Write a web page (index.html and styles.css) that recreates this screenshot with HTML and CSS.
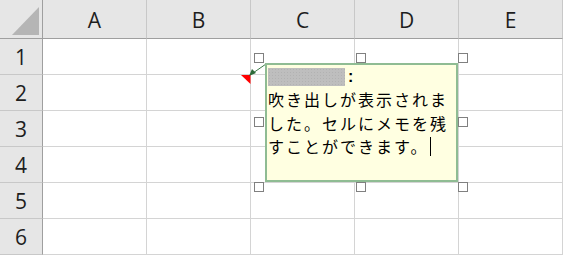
FILE: index.html
```html
<!DOCTYPE html>
<html lang="ja">
<head>
<meta charset="utf-8">
<link rel="stylesheet" href="styles.css">
</head>
<body>
<div class="sheet">
  <div class="grid">
    <div class="corner"><svg class="corner-tri" width="43" height="39" viewBox="0 0 43 39"><polygon points="12,35 39,35 39,7" fill="#b5b5b5"/></svg></div>
    <div class="ch">A</div><div class="ch">B</div><div class="ch">C</div><div class="ch">D</div><div class="ch">E</div>
    <div class="rh">1</div><div class="c"></div><div class="c"></div><div class="c"></div><div class="c"></div><div class="c"></div>
    <div class="rh">2</div><div class="c"></div><div class="c"></div><div class="c"></div><div class="c"></div><div class="c"></div>
    <div class="rh">3</div><div class="c"></div><div class="c"></div><div class="c"></div><div class="c"></div><div class="c"></div>
    <div class="rh">4</div><div class="c"></div><div class="c"></div><div class="c"></div><div class="c"></div><div class="c"></div>
    <div class="rh">5</div><div class="c"></div><div class="c"></div><div class="c"></div><div class="c"></div><div class="c"></div>
    <div class="rh">6</div><div class="c"></div><div class="c"></div><div class="c"></div><div class="c"></div><div class="c"></div>
  </div>

  <svg class="overlay" width="563" height="255" viewBox="0 0 563 255">
    <polygon points="241,75 250.5,75 250.5,84" fill="#ff0000"/>
    <line x1="266" y1="64" x2="253" y2="73" stroke="#3b7a47" stroke-width="1"/>
    <polygon points="249,76 256,73 252,69" fill="#2d6b3a"/>
  </svg>

  <div class="note">
    <div class="note-line"><span class="author"></span><span class="colon">:</span></div>
    <div class="note-line">吹き出しが表示されま</div>
    <div class="note-line">した。セルにメモを残</div>
    <div class="note-line">すことができます。<span class="caret"></span></div>
  </div>

  <div class="handle h-l h-t"></div>
  <div class="handle h-m h-t"></div>
  <div class="handle h-r h-t"></div>
  <div class="handle h-l h-v"></div>
  <div class="handle h-r h-v"></div>
  <div class="handle h-l h-b"></div>
  <div class="handle h-m h-b"></div>
  <div class="handle h-r h-b"></div>
</div>
</body>
</html>
```

FILE: styles.css
```css
html, body {
  margin: 0;
  padding: 0;
  background: #ffffff;
}

.sheet {
  position: relative;
  width: 563px;
  height: 255px;
  overflow: hidden;
  font-family: "Open Sans", "Liberation Sans", sans-serif;
}

.grid {
  display: grid;
  grid-template-columns: 43px repeat(5, 104px);
  grid-template-rows: 39px repeat(6, 36px);
}

.grid > div {
  box-sizing: border-box;
}

.corner {
  background: #e6e6e6;
  border-right: 1px solid #9f9f9f;
  border-bottom: 1px solid #9f9f9f;
}

.corner-tri {
  display: block;
}

.ch {
  background: #e6e6e6;
  border-bottom: 1px solid #9f9f9f;
  border-right: 1px solid #c8c8c8;
  display: flex;
  align-items: center;
  justify-content: center;
  font-size: 21px;
  color: #1e1e1e;
  padding-top: 1px;
}

.rh {
  background: #e6e6e6;
  border-right: 1px solid #9f9f9f;
  border-bottom: 1px solid #c8c8c8;
  display: flex;
  align-items: center;
  justify-content: center;
  font-size: 21px;
  color: #1e1e1e;
  padding-top: 1px;
}

.c {
  border-right: 1px solid #d4d4d4;
  border-bottom: 1px solid #d4d4d4;
  background: #ffffff;
}

.overlay {
  position: absolute;
  left: 0;
  top: 0;
  pointer-events: none;
}

.note {
  position: absolute;
  left: 265px;
  top: 63px;
  width: 193px;
  height: 119px;
  box-sizing: border-box;
  border: 2px solid #8fbc93;
  background: #ffffe1;
  padding: 0 0 0 1px;
  font-family: "Noto Sans CJK JP", "Noto Sans CJK SC", sans-serif;
  font-size: 16px;
  letter-spacing: 2px;
  line-height: 23.4px;
  color: #000000;
}

.note-line {
  white-space: nowrap;
  height: 23.4px;
  display: flex;
  align-items: center;
}

.author {
  display: inline-block;
  width: 77px;
  height: 18px;
  background-color: #bebebe;
  background-image: radial-gradient(circle, #b2b2b2 0.6px, transparent 0.8px);
  background-size: 3px 3px;
}

.colon {
  font-weight: 700;
  margin-left: 3px;
  font-family: "Liberation Sans", sans-serif;
  font-size: 16px;
  letter-spacing: 0;
}

.caret {
  display: inline-block;
  width: 1px;
  height: 19px;
  background: #000000;
  margin-left: 2px;
}

.handle {
  position: absolute;
  width: 10px;
  height: 10px;
  box-sizing: border-box;
  border: 1px solid #808080;
  background: #ffffff;
}

.h-l { left: 254px; }
.h-m { left: 356px; }
.h-r { left: 458px; }
.h-t { top: 53px; }
.h-v { top: 117px; }
.h-b { top: 182px; }
```
